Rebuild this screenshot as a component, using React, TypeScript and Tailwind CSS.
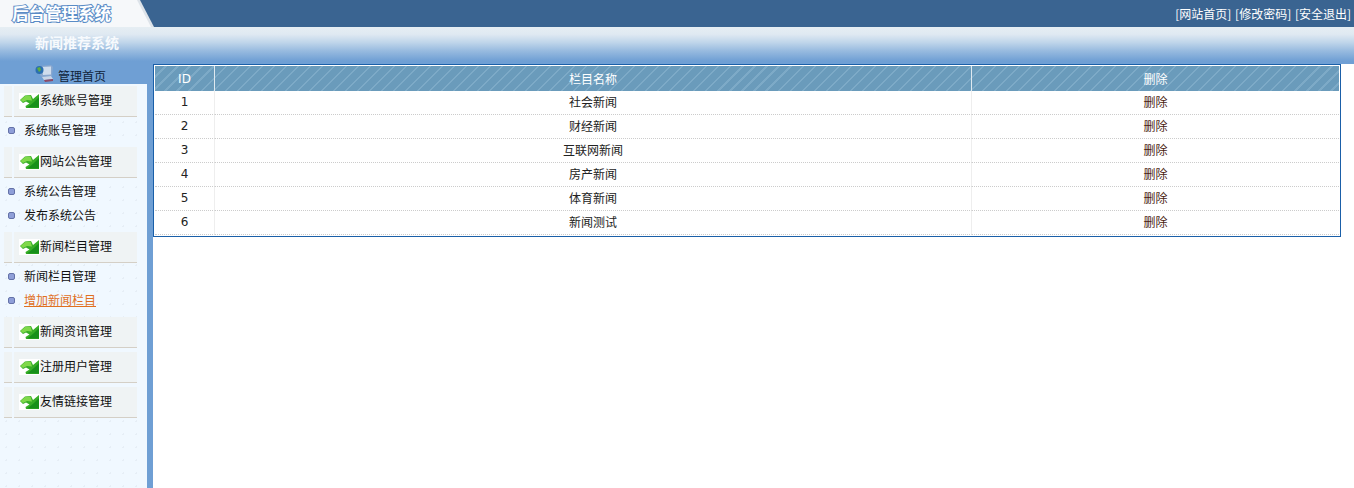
import React from 'react';

const font = { fontFamily: '"Noto Sans CJK SC", "DejaVu Sans", sans-serif' };

const menu = [
  { title: '系统账号管理', items: ['系统账号管理'] },
  { title: '网站公告管理', items: ['系统公告管理', '发布系统公告'] },
  { title: '新闻栏目管理', items: ['新闻栏目管理', '增加新闻栏目'] },
  { title: '新闻资讯管理', items: [] },
  { title: '注册用户管理', items: [] },
  { title: '友情链接管理', items: [] },
];

const rows = ['社会新闻', '财经新闻', '互联网新闻', '房产新闻', '体育新闻', '新闻测试'];

const ArrowIcon = () => (
  <svg width="21" height="16" viewBox="0 0 21 16" className="bg-white shrink-0 mt-[2px]">
    <path d="M1 7 L6 2.5 L12 2 L14 6 L20 1 L20 15 L7 15 L6.5 13 L10.5 10.5 L7 8.5 L4 10 Z" fill="#36ad26" />
    <path d="M1.5 7 L6 3 L11.5 2.5 L13 7.5 L8 7 L4 9 Z" fill="#7fd84a" />
    <path d="M8 14.5 L20 14.5 L20 4 L15 9 L12 11.5 Z" fill="#17901a" />
  </svg>
);

const HomeIcon = () => (
  <svg width="19" height="18" viewBox="0 0 19 18" className="shrink-0">
    <path d="M5 2 L16 1 L18 3 L17 12 L7 13 L5 11 Z" fill="#8aa8cf" />
    <path d="M7 3 L16 2.5 L16 10.5 L8 11 Z" fill="#cfdcec" />
    <circle cx="4.5" cy="6" r="4" fill="#2b6fb0" />
    <path d="M2 4 L5 3 L6 6 L4 8 Z" fill="#5fae3c" />
    <path d="M7 13 L16 12 L18 15 L9 16 Z" fill="#c9d5e6" />
    <path d="M9 16 L18 15 L18 17 L10 18 Z" fill="#8d4a66" />
  </svg>
);

const App = () => (
  <div className="min-h-screen flex flex-col bg-white text-[12px] leading-none text-[#222]" style={font}>
    <div className="h-[27px] bg-[#3a6491] flex items-center justify-between">
      <div className="h-[27px] w-[154px] bg-[#dde3e9] [clip-path:polygon(0_0,140px_0,154px_27px,0_27px)]">
        <div className="h-[27px] w-[152px] pl-[12px] flex items-center bg-[#f6f8fa] [clip-path:polygon(0_0,137px_0,151px_27px,0_27px)]">
          <span className="text-[16.5px] font-bold text-white [-webkit-text-stroke:2px_#5a8cc6] [paint-order:stroke_fill]">后台管理系统</span>
        </div>
      </div>
      <div className="pr-[3px] text-white whitespace-pre [word-spacing:1px]">[网站首页] [修改密码] [安全退出]</div>
    </div>

    <div className="h-[37px] pl-[35px] pt-[8px] bg-[linear-gradient(180deg,#e6eef3_0%,#dfe9f2_20%,#bfd5ea_42%,#97badf_65%,#6f9fd4_92%)]">
      <span className="text-[14px] font-bold text-[#f7fafd]">新闻推荐系统</span>
    </div>

    <div className="flex flex-1">
      <aside className="w-[153px] shrink-0 border-r-[6px] border-[#6f9fd4] bg-[#f0f8ff] bg-[radial-gradient(#e6eef6_1px,transparent_1px)] bg-[length:13px_13px]">
        <div className="h-[20px] bg-[#6f9fd4] pl-[35px] flex items-start text-[#10233a]">
          <HomeIcon />
          <span className="ml-[4px] mt-[6px]">管理首页</span>
        </div>
        <div className="pt-[2px]">
          {menu.map((group) => (
            <div key={group.title} className="mb-[4px]">
              <div className="h-[31px] flex gap-[2px] pl-[4px]">
                <div className="w-[8px] bg-[#eff3f4] border-b border-[#d4cfc6]" />
                <div className="w-[123px] bg-[#eff3f4] border-b border-[#d4cfc6] pl-[5px] pb-[2px] flex items-center">
                  <ArrowIcon />
                  <span className="text-[#111]">{group.title}</span>
                </div>
              </div>
              {group.items.length > 0 && (
                <div className="pt-[2px]">
                  {group.items.map((item) => (
                    <div key={item} className="h-[24px] flex items-center pl-[8px] pb-[2px]">
                      <span className="w-[7px] h-[7px] bg-[#8f9fd8] border border-[#6472a8] rounded-[2px] shrink-0" />
                      <span className={item === '增加新闻栏目' ? 'ml-[9px] text-[#e0701f] underline' : 'ml-[9px] text-[#111]'}>{item}</span>
                    </div>
                  ))}
                </div>
              )}
            </div>
          ))}
        </div>
      </aside>

      <main className="flex-1 pr-[13px]">
        <table className="w-full table-fixed border border-[#1a5fa8] border-separate border-spacing-0 p-px">
          <colgroup>
            <col className="w-[60px]" />
            <col className="w-[757px]" />
            <col />
          </colgroup>
          <thead>
            <tr className="h-[25px] text-white bg-[#6a9bbb] bg-[repeating-linear-gradient(135deg,#6a9bbb_0px,#6a9bbb_7px,#7daac7_7px,#7daac7_8.5px)]">
              <th className="font-normal border-r border-[#dfe9f0] [font-family:'DejaVu_Sans',sans-serif]">ID</th>
              <th className="font-normal border-r border-[#dfe9f0]">栏目名称</th>
              <th className="font-normal">删除</th>
            </tr>
          </thead>
          <tbody>
            {rows.map((name, i) => (
              <tr key={name} className="h-[24px] text-center">
                <td className="pb-[2px] border-r border-[#eeeeee] border-b border-b-[#cccccc] [border-bottom-style:dotted] [font-family:'DejaVu_Sans',sans-serif]">{i + 1}</td>
                <td className="pb-[2px] border-r border-[#eeeeee] border-b border-b-[#cccccc] [border-bottom-style:dotted]">{name}</td>
                <td className="pb-[2px] border-b border-b-[#cccccc] [border-bottom-style:dotted] text-[#4a1c10]">删除</td>
              </tr>
            ))}
          </tbody>
        </table>
      </main>
    </div>
  </div>
);

export default App;
